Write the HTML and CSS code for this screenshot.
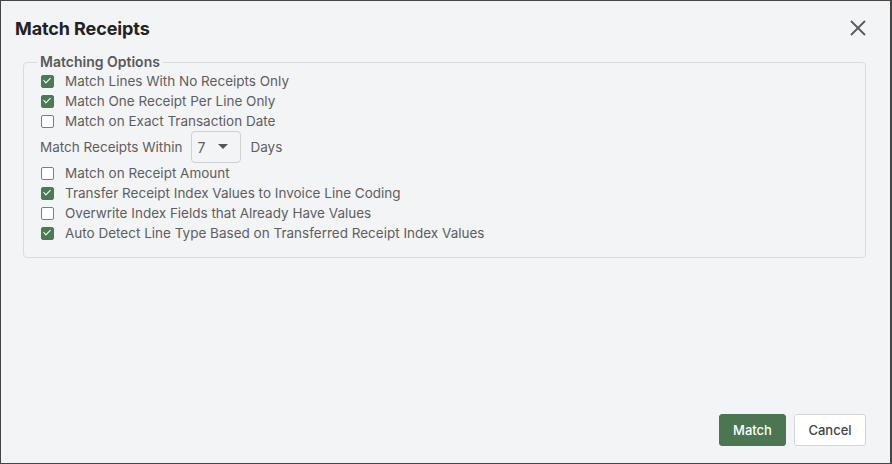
FILE: index.html
```html
<!DOCTYPE html>
<html lang="en">
<head>
<meta charset="utf-8">
<title>Match Receipts</title>
<link rel="stylesheet" href="styles.css">
</head>
<body>
<div class="dialog">
  <div class="header">
    <h1 class="title">Match Receipts</h1>
    <button class="close" aria-label="Close">
      <svg width="16" height="16" viewBox="0 0 16 16"><path d="M1 1 L15 15 M15 1 L1 15" stroke="#5a5a5a" stroke-width="1.8" fill="none"/></svg>
    </button>
  </div>
  <fieldset class="options">
    <legend class="legend">Matching Options</legend>
    <label class="row"><span class="cb checked"></span>Match Lines With No Receipts Only</label>
    <label class="row"><span class="cb checked"></span>Match One Receipt Per Line Only</label>
    <label class="row"><span class="cb"></span>Match on Exact Transaction Date</label>
    <div class="row select-row">
      <span>Match Receipts Within</span>
      <span class="select"><span>7</span><svg width="10" height="6" viewBox="0 0 10 6"><path d="M0 0 L10 0 L5 5 Z" fill="#555"/></svg></span>
      <span>Days</span>
    </div>
    <label class="row"><span class="cb"></span>Match on Receipt Amount</label>
    <label class="row"><span class="cb checked"></span>Transfer Receipt Index Values to Invoice Line Coding</label>
    <label class="row"><span class="cb"></span>Overwrite Index Fields that Already Have Values</label>
    <label class="row"><span class="cb checked"></span>Auto Detect Line Type Based on Transferred Receipt Index Values</label>
  </fieldset>
  <div class="footer">
    <button class="btn primary">Match</button>
    <button class="btn secondary">Cancel</button>
  </div>
</div>
</body>
</html>
```
FILE: styles.css
```css
html, body {
  margin: 0;
  padding: 0;
}
body {
  font-family: Inter, "Noto Sans", "Liberation Sans", sans-serif;
  background: #f3f4f6;
  color: #5c5c5c;
}
.dialog {
  box-sizing: border-box;
  width: 892px;
  height: 464px;
  border: 1px solid #454545;
  border-right-width: 2px;
  background: #f3f4f6;
  display: flex;
  flex-direction: column;
}
.header {
  display: flex;
  align-items: center;
  justify-content: space-between;
  padding: 14px 24px 0 14px;
  height: 26px;
}
.title {
  margin: 0;
  font-size: 18px;
  font-weight: 700;
  color: #222;
  letter-spacing: -0.1px;
}
.close {
  border: 0;
  background: none;
  padding: 0;
  width: 16px;
  height: 16px;
  display: flex;
}
.options {
  margin: 12px 24px 0 22px;
  padding: 0 0 14px 16px;
  border: 1px solid #d9dbde;
  border-radius: 4px;
  min-width: 0;
}
.legend {
  padding: 0 3px;
  margin-left: -3px;
  font-size: 14px;
  font-weight: 600;
  color: #595959;
  line-height: 18px;
}
.row {
  display: flex;
  align-items: center;
  height: 20px;
  font-size: 13.5px;
  color: #5e5e5e;
}
.cb {
  box-sizing: border-box;
  width: 13px;
  height: 13px;
  border: 1.5px solid #6a8a6f;
  border-radius: 2px;
  margin: 0 11px 0 1px;
  background: #fff;
  position: relative;
}
.cb.checked {
  background: #4d7a55;
  border-color: #4d7a55;
}
.cb.checked::after {
  content: "";
  position: absolute;
  left: 3px;
  top: 0px;
  width: 3px;
  height: 6px;
  border: solid #fff;
  border-width: 0 1.6px 1.6px 0;
  transform: rotate(45deg);
}
.select-row {
  height: 32px;
  gap: 9px;
}
.select {
  box-sizing: border-box;
  width: 50px;
  height: 32px;
  border: 1px solid #cfd1d4;
  border-radius: 4px;
  display: flex;
  align-items: center;
  justify-content: space-between;
  padding: 0 12px 0 5px;
  font-size: 14px;
}
.footer {
  margin-top: auto;
  display: flex;
  justify-content: flex-end;
  gap: 8px;
  padding: 0 24px 17px 0;
}
.btn {
  box-sizing: border-box;
  height: 32px;
  border-radius: 3px;
  font-family: inherit;
  font-size: 13px;
  font-weight: 500;
  cursor: pointer;
}
.primary {
  width: 67px;
  background: #4b7651;
  border: 1px solid #4b7651;
  color: #fff;
}
.secondary {
  width: 72px;
  background: #fff;
  border: 1px solid #d2d4d7;
  color: #444;
}
```
